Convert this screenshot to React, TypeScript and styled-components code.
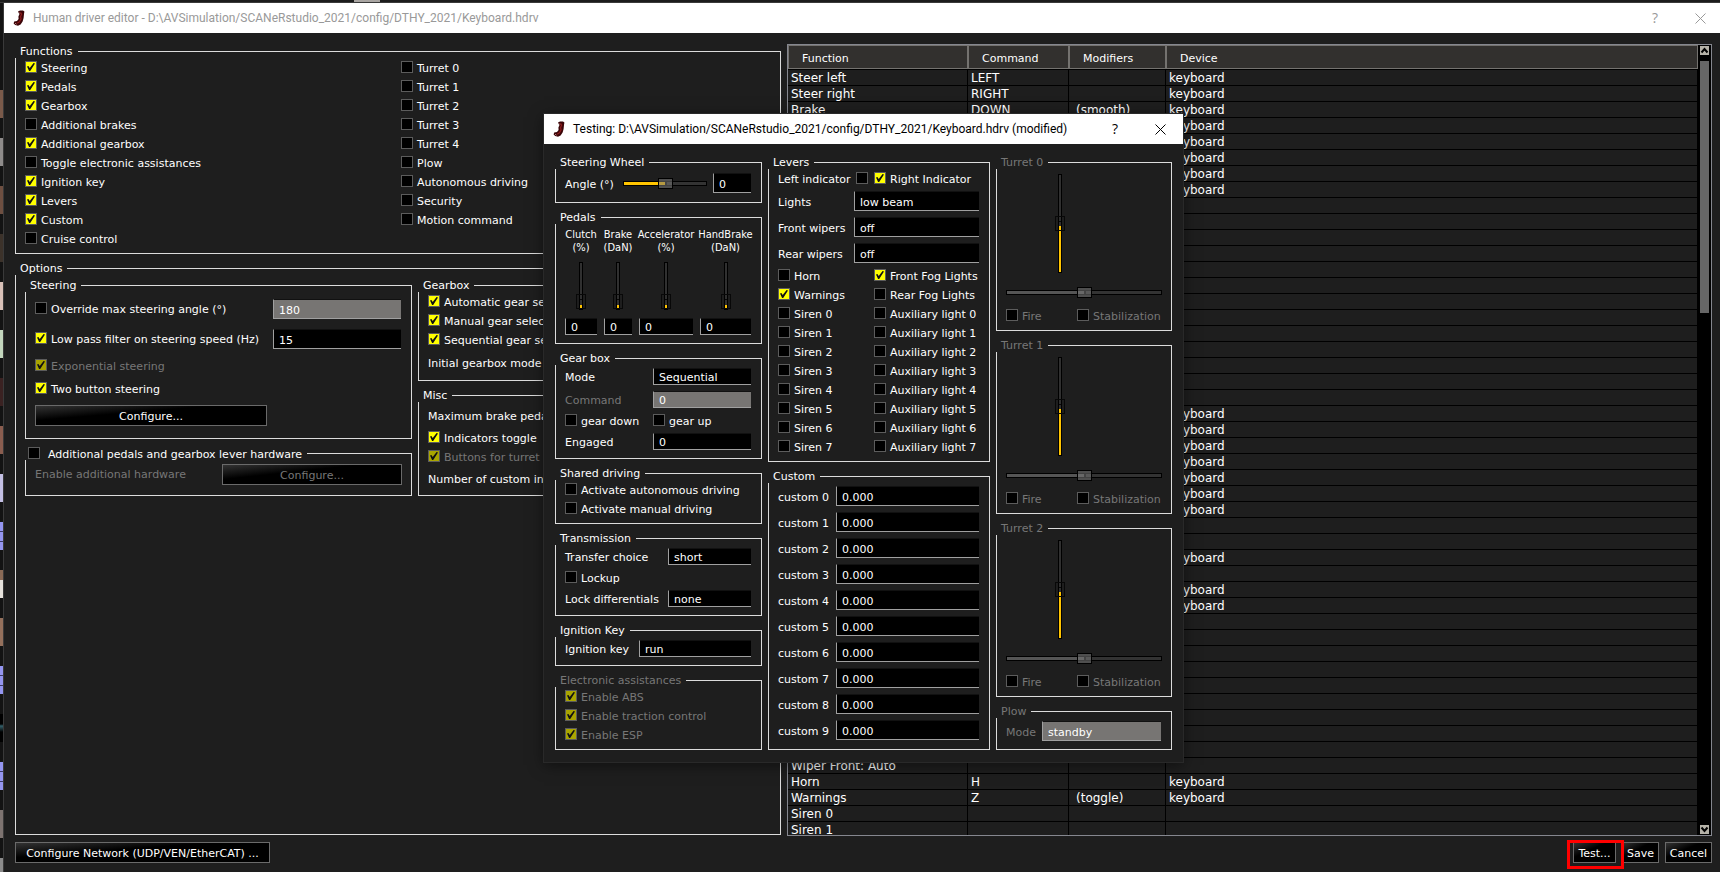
import React, { useId } from "react";
import styled, { createGlobalStyle } from "styled-components";

const color = {
  panel: "#1e1e1e",
  line: "#dcdcdc",
  text: "#ffffff",
  muted: "#777777",
  accent: "#ffc400",
  check: "#ffff00",
  checkMuted: "#a9a500",
  edge: "#6a6a6a",
};

const GlobalStyle = createGlobalStyle`
  *, *::before, *::after { box-sizing: border-box; }
  body {
    margin: 0;
    background: #121212;
    color: ${color.text};
    font: 11px/13px "DejaVu Sans", Verdana, sans-serif;
  }
  input, button { font: inherit; color: inherit; margin: 0; }
`;

/* ---------- desktop and windows ---------- */

const Desktop = styled.div`
  display: grid;
  grid-template-columns: 4px minmax(0, 1fr);
  grid-template-rows: 3px minmax(0, 1fr);
  height: 100vh;
  position: relative;
  overflow: hidden;
`;

const TopStrip = styled.div`
  grid-column: 1 / -1;
  background: #1c1c1c;
  border-bottom: 1px solid #3a3a3a;
  padding-left: 354px;
`;

const TopAvatar = styled.div`
  width: 26px;
  height: 2px;
  background: #a9a5a2;
`;

const SideStrip = styled.div`
  display: flex;
  flex-direction: column;
  gap: 20px;
  padding-top: 87px;
  overflow: hidden;
  border-right: 1px solid #3a3a3a;
  background: #131313;
`;

const Avatar = styled.div<{ $tone: string }>`
  flex: none;
  height: 28px;
  background: ${(p) => p.$tone};
`;

const MainWindow = styled.main`
  display: flex;
  flex-direction: column;
  min-height: 0;
  background: ${color.panel};
`;

const TitleBar = styled.header<{ $active?: boolean }>`
  flex: none;
  display: flex;
  align-items: center;
  height: 30px;
  padding: 0 ${(p) => (p.$active ? 3 : 0)}px 0 9px;
  gap: 8px;
  background: #ffffff;
  color: ${(p) => (p.$active ? "#000000" : "#999999")};
`;

const Title = styled.h1`
  flex: 1;
  margin: 0;
  font: 400 12px/16px Roboto, "Segoe UI", sans-serif;
  white-space: nowrap;
`;

const TitleButtons = styled.div`
  display: flex;
  gap: 5px;
`;

const TitleButton = styled.button`
  display: flex;
  align-items: center;
  justify-content: center;
  width: 40px;
  height: 28px;
  padding: 0;
  border: 0;
  background: none;
  font: 14px/16px "Open Sans", "Segoe UI", sans-serif;
`;

const WindowBody = styled.div`
  flex: 1;
  min-height: 0;
  display: grid;
  grid-template-columns: 766fr 925fr;
  gap: 6px;
  padding: 11px 8px 0 11px;
`;

const LeftPane = styled.div`
  display: flex;
  flex-direction: column;
  gap: 8px;
  min-width: 0;
  padding: 1px 0;
`;

const Footer = styled.footer`
  flex: none;
  display: flex;
  gap: 6px;
  padding: 6px 8px 9px 11px;
`;

const Spacer = styled.div`
  flex: 1;
`;

const Highlight = styled.div`
  position: relative;
  display: flex;

  &::after {
    content: "";
    position: absolute;
    inset: -2px -8px -6px -6px;
    border: 3px solid #ff0000;
    pointer-events: none;
  }
`;

const Dialog = styled.section`
  position: absolute;
  left: 544px;
  top: 114px;
  width: 639px;
  background: ${color.panel};
  box-shadow: 0 0 0 1px #292929, 0 3px 14px rgba(0, 0, 0, 0.5);
`;

const DialogBody = styled.div`
  display: grid;
  grid-template-columns: 207fr 222fr 176fr;
  gap: 6px;
  padding: 12px 11px;
`;

const Column = styled.div`
  display: flex;
  flex-direction: column;
  gap: 8px;
  min-width: 0;
`;

/* ---------- group box ---------- */

const Box = styled.fieldset<{ $grow?: boolean }>`
  margin: 0;
  padding: 0;
  min-width: 0;
  border: 1px solid ${color.line};
  flex: ${(p) => (p.$grow ? "1 1 0" : "none")};
`;

const Legend = styled.legend<{ $muted?: boolean; $check?: boolean }>`
  margin-left: -1px;
  padding: 0 5px 0 ${(p) => (p.$check ? 3 : 5)}px;
  height: 13px;
  background: ${color.panel};
  color: ${(p) => (p.$muted ? color.muted : color.text)};
`;

const Stack = styled.div<{ $gap?: number; $pad?: string }>`
  display: flex;
  flex-direction: column;
  gap: ${(p) => p.$gap ?? 6}px;
  padding: ${(p) => p.$pad ?? "3px 10px 8px 9px"};
`;

/* ---------- form controls ---------- */

const CheckLabel = styled.label<{ $muted?: boolean; $gap?: number; $reverse?: boolean }>`
  display: flex;
  flex-direction: ${(p) => (p.$reverse ? "row-reverse" : "row")};
  justify-content: ${(p) => (p.$reverse ? "space-between" : "flex-start")};
  gap: ${(p) => p.$gap ?? 4}px;
  height: 13px;
  line-height: 15px;
  white-space: nowrap;
  color: ${(p) => (p.$muted ? color.muted : color.text)};
`;

const Tick = styled.input`
  appearance: none;
  flex: none;
  width: 12px;
  height: 12px;
  border: 1px solid #5c5c5c;
  background: #000000;

  &:checked {
    background: ${color.check};
  }
  &:checked:disabled {
    background: ${color.checkMuted};
  }
  &:checked::before {
    content: "";
    display: block;
    width: 8px;
    height: 8px;
    margin: 1px;
    background: #111111;
    clip-path: polygon(0 45%, 18% 38%, 34% 62%, 82% 0, 100% 6%, 40% 100%, 26% 100%);
  }
`;

const Field = styled.input<{ $small?: boolean }>`
  width: 100%;
  min-width: 0;
  height: ${(p) => (p.$small ? 17 : 20)}px;
  padding: 2px 0 0 5px;
  border: 0 solid #a0a0a0;
  border-width: 1px 0 1px 1px;
  border-top-color: #111111;
  border-radius: 0;
  background: #000000;
  color: ${color.text};

  &:disabled {
    background: #777573;
  }
`;

const PushButton = styled.button<{ $width?: number }>`
  height: 21px;
  width: ${(p) => (p.$width ? `${p.$width}px` : "auto")};
  padding: 2px 3px 0;
  border: 1px solid ${color.edge};
  background: linear-gradient(to bottom right, #333333, #000000 38%);
  color: ${color.text};
  white-space: nowrap;

  &:disabled {
    color: ${color.muted};
  }
`;

const FieldRow = styled.div<{ $label: string; $muted?: boolean }>`
  display: grid;
  grid-template-columns: ${(p) => p.$label} minmax(0, 1fr);
  align-items: center;
  white-space: nowrap;
  color: ${(p) => (p.$muted ? color.muted : color.text)};
`;

const FieldLabel = styled.label`
  padding-top: 2px;
`;

const CheckSlot = styled.div`
  align-self: start;
  padding-top: 3px;
`;

const TextRow = styled.div<{ $height: number }>`
  display: flex;
  align-items: center;
  height: ${(p) => p.$height}px;
  white-space: nowrap;
`;

const HSlider = styled.input<{ $fill: string; $tone: string }>`
  appearance: none;
  display: block;
  width: 100%;
  min-width: 0;
  height: 11px;
  background: none;

  &::-webkit-slider-runnable-track {
    height: 5px;
    border: 1px solid #000000;
    background: linear-gradient(to right, ${(p) => `${p.$tone} ${p.$fill}, #333333 ${p.$fill}`});
  }
  &::-webkit-slider-thumb {
    appearance: none;
    width: 15px;
    height: 11px;
    margin-top: -4px;
    border: 1px solid #000000;
    background: linear-gradient(to right, transparent 6px, #444444 6px 8px, transparent 8px) center / 100% 3px no-repeat,
      rgba(120, 120, 120, 0.55);
  }
`;

const VSlider = styled.input<{ $fill: number; $length: number }>`
  appearance: none;
  display: block;
  writing-mode: vertical-lr;
  direction: rtl;
  width: 10px;
  height: ${(p) => p.$length}px;
  background: none;

  &::-webkit-slider-runnable-track {
    width: 4px;
    border: 1px solid #000000;
    background: linear-gradient(to top, ${(p) => `${color.accent} ${p.$fill}px, #303030 ${p.$fill}px`});
  }
  &::-webkit-slider-thumb {
    appearance: none;
    width: 10px;
    height: 15px;
    margin-left: -4px;
    border: 1px solid #080808;
    background: linear-gradient(#080808, #080808) 3px 4px / 2px 1px no-repeat;
  }
`;

const AngleRow = styled.div`
  display: grid;
  grid-template-columns: 52px minmax(0, 1fr) 38px;
  column-gap: 6px;
  align-items: center;
  white-space: nowrap;
`;

const PedalGrid = styled.div`
  display: grid;
  grid-template-columns: 32px 28px minmax(0, 1fr) 51px;
  gap: 7px;
  padding: 4px 10px 8px 9px;
`;

const Pedal = styled.div`
  display: flex;
  flex-direction: column;
  align-items: center;
  gap: 8px;
`;

const PedalLabel = styled.label`
  display: flex;
  flex-direction: column;
  align-items: center;
  white-space: nowrap;
  font-family: "DejaVu Sans Condensed", "DejaVu Sans", sans-serif;
  font-stretch: condensed;
  width: 0;
`;

const TwoColumns = styled.div<{ $columns: string }>`
  display: grid;
  grid-template-columns: ${(p) => p.$columns};
  row-gap: 6px;
`;

const FunctionList = styled.div`
  display: grid;
  grid-template-columns: 1fr 1fr;
  grid-template-rows: repeat(10, 13px);
  grid-auto-flow: column;
  row-gap: 6px;
  padding: 3px 3px 8px 9px;
`;

const OptionColumns = styled.div`
  display: grid;
  grid-template-columns: 387fr 353fr;
  column-gap: 6px;
  padding: 4px 9px;
`;

const IndicatorCell = styled.div`
  width: 90px;
`;

const TurretStick = styled.div`
  padding: 0 0 3px 49px;
`;

/* ---------- assignment table ---------- */

const TableFrame = styled.div`
  display: flex;
  min-width: 0;
  min-height: 0;
  border: 1px solid #85878f;
`;

const TableView = styled.div`
  flex: 1;
  min-width: 0;
  overflow: hidden;
`;

const Table = styled.table`
  width: 100%;
  table-layout: fixed;
  border-spacing: 0;
  text-align: left;
`;

const HeadCell = styled.th<{ $width?: number }>`
  width: ${(p) => (p.$width ? `${p.$width}px` : "auto")};
  height: 25px;
  padding: 2px 0 0 14px;
  border-bottom: 1px solid #000000;
  background: #32302e;
  box-shadow: inset 1px 1px 0 #74726f, inset -1px -1px 0 #74726f;
  font-weight: 400;
`;

const Cell = styled.td<{ $indent?: boolean }>`
  height: 16px;
  padding: 2px 0 0 ${(p) => (p.$indent ? 7 : 3)}px;
  border-right: 1px solid #000000;
  border-bottom: 1px solid #000000;
  font-size: 12px;
  line-height: 13px;
  white-space: nowrap;
`;

const ScrollBar = styled.div`
  flex: none;
  display: flex;
  flex-direction: column;
  align-items: center;
  width: 13px;
  padding: 1px 0;
  background: #000000;
`;

const ScrollButton = styled.button`
  display: flex;
  flex: none;
  width: 9px;
  height: 9px;
  padding: 0;
  border: 0;
  background: #b5b2a8;
`;

const ScrollThumb = styled.div`
  flex: none;
  width: 9px;
  height: 32%;
  margin: 6px 0 auto;
  background: #666666;
`;

/* ---------- pieces ---------- */

const AppIcon = () => (
  <svg width="12" height="16" viewBox="0 0 12 16" aria-hidden="true">
    <path
      d="M5 1.6 7 .6 10 .4 11.4 1.6 11 4 10.6 8 9.6 11.6 7.6 14.4 5 15.8 2.2 15 .6 13.4 1.2 11.6 4 11 5.6 9 5.4 6.4 6.4 4.2Z"
      fill="#3a0508"
    />
    <path d="M7.4 2.4 8.6 4 7.6 6.6 8 9 6.4 11.8 4.2 13.2" fill="none" stroke="#8c1a1c" strokeWidth="1.3" />
    <path d="M2 13.2 3.6 14.2M6.4 2.6 6.8 3.6" stroke="#c98482" strokeWidth="0.9" />
  </svg>
);

const CloseIcon = () => (
  <svg width="11" height="11" viewBox="0 0 11 11" aria-hidden="true">
    <path d="M.5.5 10.5 10.5M10.5.5.5 10.5" stroke="currentColor" fill="none" />
  </svg>
);

const Arrow = ({ down }: { down?: boolean }) => (
  <svg width="9" height="9" viewBox="0 0 9 9" aria-hidden="true">
    <path d={down ? "M1.5 2.5 4.5 6 7.5 2.5" : "M1.5 6.5 4.5 3 7.5 6.5"} fill="none" stroke="#000" strokeWidth="2" />
  </svg>
);

const WindowTitle = ({ text, active }: { text: string; active?: boolean }) => (
  <TitleBar $active={active}>
    <AppIcon />
    <Title>{text}</Title>
    <TitleButtons>
      <TitleButton type="button" aria-label="Help">?</TitleButton>
      <TitleButton type="button" aria-label="Close"><CloseIcon /></TitleButton>
    </TitleButtons>
  </TitleBar>
);

type CheckProps = { label: string; on?: boolean; off?: boolean; reverse?: boolean; gap?: number };
const Check = ({ label, on, off, reverse, gap }: CheckProps) => (
  <CheckLabel $muted={off} $reverse={reverse} $gap={gap}>
    <Tick type="checkbox" defaultChecked={on} disabled={off} />
    {label}
  </CheckLabel>
);

type GroupProps = { title: React.ReactNode; muted?: boolean; grow?: boolean; check?: boolean; children: React.ReactNode };
const Group = ({ title, muted, grow, check, children }: GroupProps) => (
  <Box $grow={grow}>
    <Legend $muted={muted} $check={check}>{title}</Legend>
    {children}
  </Box>
);

type LabeledProps = { label: string; value: string; width: string; small?: boolean; off?: boolean };
const Labeled = ({ label, value, width, small, off }: LabeledProps) => {
  const id = useId();
  return (
    <FieldRow $label={width} $muted={off}>
      <FieldLabel htmlFor={id}>{label}</FieldLabel>
      <Field id={id} $small={small} defaultValue={value} disabled={off} />
    </FieldRow>
  );
};

const PedalControl = ({ name, unit }: { name: string; unit: string }) => {
  const id = useId();
  return (
    <Pedal>
      <PedalLabel htmlFor={id}>
        <span>{name}</span>
        <span>{unit}</span>
      </PedalLabel>
      <VSlider type="range" defaultValue={0} $fill={4} $length={48} aria-label={name} />
      <Field id={id} $small defaultValue="0" />
    </Pedal>
  );
};

const Turret = ({ index }: { index: number }) => (
  <Group title={`Turret ${index}`} muted>
    <Stack $gap={11} $pad="5px 9px 8px 9px">
      <TurretStick>
        <VSlider type="range" defaultValue={50} disabled $fill={46} $length={99} aria-label={`Turret ${index} elevation`} />
      </TurretStick>
      <HSlider type="range" defaultValue={50} disabled $fill="50%" $tone="#555555" aria-label={`Turret ${index} rotation`} />
      <TwoColumns $columns="71px 1fr">
        <Check label="Fire" off />
        <Check label="Stabilization" off />
      </TwoColumns>
    </Stack>
  </Group>
);

/* ---------- data ---------- */

const functionList: [string, boolean][] = [
  ["Steering", true],
  ["Pedals", true],
  ["Gearbox", true],
  ["Additional brakes", false],
  ["Additional gearbox", true],
  ["Toggle electronic assistances", false],
  ["Ignition key", true],
  ["Levers", true],
  ["Custom", true],
  ["Cruise control", false],
  ["Turret 0", false],
  ["Turret 1", false],
  ["Turret 2", false],
  ["Turret 3", false],
  ["Turret 4", false],
  ["Plow", false],
  ["Autonomous driving", false],
  ["Security", false],
  ["Motion command", false],
];

const keyboardRows = [0, 1, 2, 3, 4, 5, 6, 7, 21, 22, 23, 24, 25, 26, 27, 30, 32, 33, 44, 45];
const assignments: Record<number, [string, string, string]> = {
  0: ["Steer left", "LEFT", ""],
  1: ["Steer right", "RIGHT", ""],
  2: ["Brake", "DOWN", "(smooth)"],
  43: ["Wiper Front: Auto", "", ""],
  44: ["Horn", "H", ""],
  45: ["Warnings", "Z", "(toggle)"],
  46: ["Siren 0", "", ""],
  47: ["Siren 1", "", ""],
};
const rows = Array.from({ length: 48 }, (_, i) => [
  ...(assignments[i] ?? ["", "", ""]),
  keyboardRows.includes(i) ? "keyboard" : "",
]);

const leverPairs: [string, string][] = [
  ["Horn", "Front Fog Lights"],
  ["Warnings", "Rear Fog Lights"],
  ...Array.from({ length: 8 }, (_, i): [string, string] => [`Siren ${i}`, `Auxiliary light ${i}`]),
];

const violet = "linear-gradient(#9495f0 9px, #3a3a66 9px 10px, #9495f0 10px 19px, #3a3a66 19px 20px, #9495f0 20px)";
const avatars = [
  "#7a5a4a", "#8e8b8a", "#6e4f41", "#3c322a", "#d9c1b8", "#c3d6bd", "#3a2222",
  "#8a5d4f", "#c4c0e4", violet, "linear-gradient(#8a6a56 10px, #e6e2dc 10px)", "#94705c",
  violet, "linear-gradient(#000 10px, #34606a 12px, #000 18px)", violet, "#7d7370", "#8b8b8b",
];

/* ---------- panes ---------- */

const OptionsPane = () => (
  <Group title="Options" grow>
    <OptionColumns>
      <Column>
        <Group title="Steering">
          <Stack $gap={10} $pad="7px 10px 12px 9px">
            <FieldRow $label="238px">
              <CheckSlot>
                <Check label="Override max steering angle (°)" />
              </CheckSlot>
              <Field aria-label="Max steering angle" defaultValue="180" disabled />
            </FieldRow>
            <FieldRow $label="238px">
              <CheckSlot>
                <Check label="Low pass filter on steering speed (Hz)" on />
              </CheckSlot>
              <Field aria-label="Low pass filter frequency" defaultValue="15" />
            </FieldRow>
            <Check label="Exponential steering" on off />
            <Check label="Two button steering" on />
            <PushButton type="button" $width={232}>Configure...</PushButton>
          </Stack>
        </Group>
        <Group check title={<Check label="Additional pedals and gearbox lever hardware" gap={8} />}>
          <Stack $pad="4px 9px 10px 9px">
            <FieldRow $label="187px" $muted>
              <span>Enable additional hardware</span>
              <PushButton type="button" disabled>Configure...</PushButton>
            </FieldRow>
          </Stack>
        </Group>
      </Column>
      <Column>
        <Group title="Gearbox">
          <Stack $pad="3px 9px 5px">
            <Check label="Automatic gear selection" on />
            <Check label="Manual gear selection" on />
            <Check label="Sequential gear selection" on />
            <TextRow $height={23}>Initial gearbox mode</TextRow>
          </Stack>
        </Group>
        <Group title="Misc">
          <Stack $pad="5px 9px">
            <TextRow $height={18}>Maximum brake pedal force</TextRow>
            <Check label="Indicators toggle" on />
            <Check label="Buttons for turret" on off />
            <TextRow $height={21}>Number of custom inputs</TextRow>
          </Stack>
        </Group>
      </Column>
    </OptionColumns>
  </Group>
);

const AssignmentTable = () => (
  <TableFrame>
    <TableView>
      <Table>
        <thead>
          <tr>
            <HeadCell $width={180}>Function</HeadCell>
            <HeadCell $width={101}>Command</HeadCell>
            <HeadCell $width={97}>Modifiers</HeadCell>
            <HeadCell>Device</HeadCell>
          </tr>
        </thead>
        <tbody>
          {rows.map((row, i) => (
            <tr key={i}>
              {row.map((value, c) => (
                <Cell key={c} $indent={c === 2}>{value}</Cell>
              ))}
            </tr>
          ))}
        </tbody>
      </Table>
    </TableView>
    <ScrollBar>
      <ScrollButton type="button" aria-label="Scroll up"><Arrow /></ScrollButton>
      <ScrollThumb />
      <ScrollButton type="button" aria-label="Scroll down"><Arrow down /></ScrollButton>
    </ScrollBar>
  </TableFrame>
);

const ControlsColumn = () => (
  <Column>
    <Group title="Steering Wheel">
      <Stack $pad="4px 10px 9px 9px">
        <AngleRow>
          <FieldLabel htmlFor="angle">Angle (°)</FieldLabel>
          <HSlider type="range" defaultValue={50} $fill="50%" $tone={color.accent} aria-label="Angle" />
          <Field id="angle" defaultValue="0" />
        </AngleRow>
      </Stack>
    </Group>
    <Group title="Pedals">
      <PedalGrid>
        <PedalControl name="Clutch" unit="(%)" />
        <PedalControl name="Brake" unit="(DaN)" />
        <PedalControl name="Accelerator" unit="(%)" />
        <PedalControl name="HandBrake" unit="(DaN)" />
      </PedalGrid>
    </Group>
    <Group title="Gear box">
      <Stack>
        <Labeled label="Mode" value="Sequential" width="88px" small />
        <Labeled label="Command" value="0" width="88px" small off />
        <TwoColumns $columns="88px 1fr">
          <Check label="gear down" />
          <Check label="gear up" />
        </TwoColumns>
        <Labeled label="Engaged" value="0" width="88px" small />
      </Stack>
    </Group>
    <Group title="Shared driving">
      <Stack>
        <Check label="Activate autonomous driving" />
        <Check label="Activate manual driving" />
      </Stack>
    </Group>
    <Group title="Transmission">
      <Stack>
        <Labeled label="Transfer choice" value="short" width="103px" small />
        <Check label="Lockup" />
        <Labeled label="Lock differentials" value="none" width="103px" small />
      </Stack>
    </Group>
    <Group title="Ignition Key">
      <Stack>
        <Labeled label="Ignition key" value="run" width="74px" small />
      </Stack>
    </Group>
    <Group title="Electronic assistances" muted>
      <Stack>
        <Check label="Enable ABS" on off />
        <Check label="Enable traction control" on off />
        <Check label="Enable ESP" on off />
      </Stack>
    </Group>
  </Column>
);

const LeversColumn = () => (
  <Column>
    <Group title="Levers">
      <Stack>
        <TwoColumns $columns="96px 1fr">
          <IndicatorCell>
            <Check label="Left indicator" reverse />
          </IndicatorCell>
          <Check label="Right Indicator" on />
        </TwoColumns>
        <Labeled label="Lights" value="low beam" width="76px" />
        <Labeled label="Front wipers" value="off" width="76px" />
        <Labeled label="Rear wipers" value="off" width="76px" />
        <TwoColumns $columns="96px 1fr">
          {leverPairs.map(([left, right]) => (
            <React.Fragment key={left}>
              <Check label={left} on={left === "Warnings"} />
              <Check label={right} on={right === "Front Fog Lights"} />
            </React.Fragment>
          ))}
        </TwoColumns>
      </Stack>
    </Group>
    <Group title="Custom" grow>
      <Stack>
        {Array.from({ length: 10 }, (_, i) => (
          <Labeled key={i} label={`custom ${i}`} value="0.000" width="58px" />
        ))}
      </Stack>
    </Group>
  </Column>
);

export default function App() {
  return (
    <>
      <GlobalStyle />
      <Desktop>
        <TopStrip>
          <TopAvatar />
        </TopStrip>
        <SideStrip>
          {avatars.map((tone, i) => (
            <Avatar key={i} $tone={tone} />
          ))}
        </SideStrip>
        <MainWindow>
          <WindowTitle text="Human driver editor - D:\AVSimulation/SCANeRstudio_2021/config/DTHY_2021/Keyboard.hdrv" />
          <WindowBody>
            <LeftPane>
              <Group title="Functions">
                <FunctionList>
                  {functionList.map(([label, on]) => (
                    <Check key={label} label={label} on={on} />
                  ))}
                </FunctionList>
              </Group>
              <OptionsPane />
            </LeftPane>
            <AssignmentTable />
          </WindowBody>
          <Footer>
            <PushButton type="button" $width={255}>Configure Network (UDP/VEN/EtherCAT) ...</PushButton>
            <Spacer />
            <Highlight>
              <PushButton type="button" $width={43}>Test...</PushButton>
            </Highlight>
            <PushButton type="button" $width={37}>Save</PushButton>
            <PushButton type="button" $width={47}>Cancel</PushButton>
          </Footer>
        </MainWindow>
        <Dialog role="dialog" aria-label="Testing">
          <WindowTitle active text="Testing: D:\AVSimulation/SCANeRstudio_2021/config/DTHY_2021/Keyboard.hdrv (modified)" />
          <DialogBody>
            <ControlsColumn />
            <LeversColumn />
            <Column>
              <Turret index={0} />
              <Turret index={1} />
              <Turret index={2} />
              <Group title="Plow" muted grow>
                <Stack>
                  <Labeled label="Mode" value="standby" width="36px" off />
                </Stack>
              </Group>
            </Column>
          </DialogBody>
        </Dialog>
      </Desktop>
    </>
  );
}
